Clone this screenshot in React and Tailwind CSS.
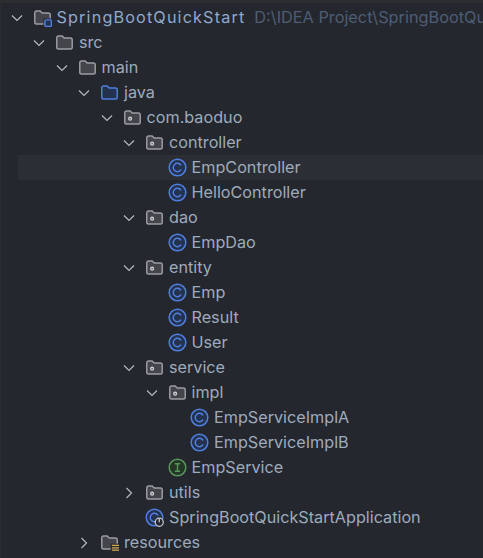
const BLUE = "#4F7FE0";
const GREY = "#9A9DA3";

function Folder({ blue, pkg, mod, res }) {
  return (
    <svg width="19" height="19" viewBox="0 0 16 16" className="shrink-0" fill="none">
      <path
        d="M1.5 4A1.5 1.5 0 0 1 3 2.5h3l1.8 1.8H13A1.5 1.5 0 0 1 14.5 5.8V12A1.5 1.5 0 0 1 13 13.5H3A1.5 1.5 0 0 1 1.5 12z"
        fill={blue ? "#25324D" : "#43454A"}
        stroke={blue ? BLUE : GREY}
        strokeWidth="1.25"
      />
      {pkg && <circle cx="6" cy="9" r="1.2" stroke="#CED0D6" strokeWidth="1.1" />}
      {mod && (
        <g>
          <rect x="8.8" y="8.8" width="7.2" height="7.2" fill="#24272E" />
          <rect x="10" y="10" width="5.5" height="5.5" rx="1.2" fill="#25324D" stroke={BLUE} strokeWidth="1.25" />
        </g>
      )}
      {res && (
        <g stroke="#D6AE58" strokeWidth="1.1">
          <rect x="9" y="9" width="7" height="7" fill="#24272E" stroke="none" />
          <path d="M10 10.5h6M10 12.5h6M10 14.5h6" />
        </g>
      )}
    </svg>
  );
}

function Badge({ kind, run }) {
  const green = kind === "I";
  const c = green ? "#57965C" : BLUE;
  return (
    <svg width="19" height="19" viewBox="0 0 16 16" className="shrink-0" fill="none">
      <circle cx="8" cy="8" r="7" fill={green ? "#253627" : "#25324D"} stroke={c} strokeWidth="1.25" />
      {green ? (
        <path d="M5.8 4.8h4.4M5.8 11.2h4.4M8 4.8v6.4" stroke={c} strokeWidth="1.2" />
      ) : (
        <path d="M10.7 5.9A3.5 3.5 0 1 0 10.7 10.1" stroke={c} strokeWidth="1.25" strokeLinecap="round" />
      )}
      {run && (
        <g>
          <circle cx="12" cy="12" r="3.4" fill="#24272E" stroke="#CED0D6" strokeWidth="1" />
          <path d="M12 9.2v2.8" stroke="#CED0D6" strokeWidth="1" />
        </g>
      )}
    </svg>
  );
}

function Chevron({ state }) {
  return (
    <span className="w-4 h-4 shrink-0 flex items-center justify-center">
      {state && (
        <svg width="16" height="16" viewBox="0 0 16 16" fill="none">
          <path
            d={state === "open" ? "M3 5.5l5 5 5-5" : "M5.5 3l5 5-5 5"}
            stroke="#B4B8BF"
            strokeWidth="1.2"
          />
        </svg>
      )}
    </span>
  );
}

const indent = [
  "pl-[7.5px]",
  "pl-[30px]",
  "pl-[52.5px]",
  "pl-[75px]",
  "pl-[97.5px]",
  "pl-[120px]",
  "pl-[142.5px]",
  "pl-[165px]",
];

const rows = [
  { l: 0, c: "open", i: <Folder mod />, t: "SpringBootQuickStart", bold: true, hint: "D:\\IDEA Project\\SpringBootQuickStart" },
  { l: 1, c: "open", i: <Folder />, t: "src" },
  { l: 2, c: "open", i: <Folder />, t: "main" },
  { l: 3, c: "open", i: <Folder blue />, t: "java" },
  { l: 4, c: "open", i: <Folder pkg />, t: "com.baoduo" },
  { l: 5, c: "open", i: <Folder pkg />, t: "controller" },
  { l: 6, i: <Badge />, t: "EmpController", sel: true },
  { l: 6, i: <Badge />, t: "HelloController" },
  { l: 5, c: "open", i: <Folder pkg />, t: "dao" },
  { l: 6, i: <Badge />, t: "EmpDao" },
  { l: 5, c: "open", i: <Folder pkg />, t: "entity" },
  { l: 6, i: <Badge />, t: "Emp" },
  { l: 6, i: <Badge />, t: "Result" },
  { l: 6, i: <Badge />, t: "User" },
  { l: 5, c: "open", i: <Folder pkg />, t: "service" },
  { l: 6, c: "open", i: <Folder pkg />, t: "impl" },
  { l: 7, i: <Badge />, t: "EmpServiceImplA" },
  { l: 7, i: <Badge />, t: "EmpServiceImplB" },
  { l: 6, i: <Badge kind="I" />, t: "EmpService" },
  { l: 5, c: "closed", i: <Folder pkg />, t: "utils" },
  { l: 5, i: <Badge run />, t: "SpringBootQuickStartApplication" },
  { l: 3, c: "closed", i: <Folder res />, t: "resources" },
];

export default function App() {
  return (
    <div className="w-[483px] h-[558px] bg-[#2B2D30] pt-[3px] pl-px overflow-hidden">
      <div className="h-full bg-[#24272E] pt-[2px] font-['Inter',sans-serif] text-[16.2px] text-[#9FABBC] whitespace-nowrap overflow-hidden">
        {rows.map((r, n) => (
          <div key={n} className={`h-[25px] ${r.sel ? "ml-[17px] bg-[#2B2E35]" : ""}`}>
            <div className={`h-[25px] flex items-center ${r.sel ? "pl-[125.5px]" : indent[r.l]}`}>
              <Chevron state={r.c} />
              <span className="ml-[8px] mr-[5px] flex">{r.i}</span>
              <span className={r.bold ? "tracking-[1.15px] text-[#90A9CC]" : ""}>{r.t}</span>
              {r.hint && <span className="ml-[9px] text-[16.3px] text-[#4E5D75]">{r.hint}</span>}
            </div>
          </div>
        ))}
      </div>
    </div>
  );
}
